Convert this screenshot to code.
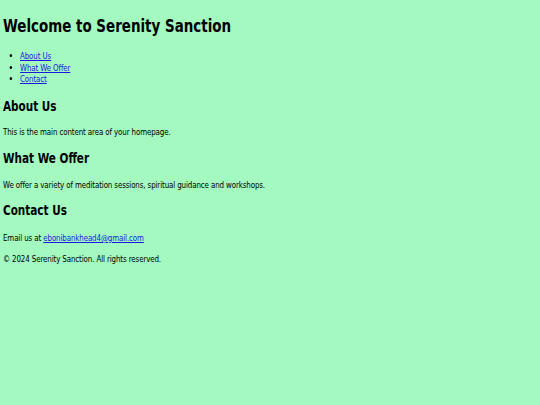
export default function App() {
  return (
    <div className="min-h-[405px] bg-[#a3f9bf] px-[3px] text-black" style={{ fontFamily: '"DejaVu Sans Condensed", "DejaVu Sans", sans-serif' }}>
      {/* condensed face is not installed, so squeeze the regular one */}
      <div className="origin-top-left scale-x-[0.83]">
        <header>
          <h1 className="pt-[15px] text-[18px] font-bold leading-[22px]">Welcome to Serenity Sanction</h1>
          <nav>
            <ul className="mt-[13px] list-disc pl-[20.5px] text-[9.5px] leading-[11.5px] tracking-[-0.15px]">
              <li><a href="#about" className="text-[#1a1ae0] underline">About Us</a></li>
              <li><a href="#offer" className="text-[#1a1ae0] underline">What We Offer</a></li>
              <li><a href="#contact" className="text-[#1a1ae0] underline">Contact</a></li>
            </ul>
          </nav>
        </header>

        <main className="text-[9.5px] leading-[11.5px] tracking-[-0.15px]">
          <section id="about">
            <h2 className="mt-[13px] text-[14px] font-bold leading-[17px] tracking-normal">About Us</h2>
            <p className="mt-[11.5px]">This is the main content area of your homepage.</p>
          </section>
          <section id="offer">
            <h2 className="mt-[12.5px] text-[14px] font-bold leading-[17px] tracking-normal">What We Offer</h2>
            <p className="mt-[11.5px]">We offer a variety of meditation sessions, spiritual guidance and workshops.</p>
          </section>
          <section id="contact">
            <h2 className="mt-[11.5px] text-[14px] font-bold leading-[17px] tracking-normal">Contact Us</h2>
            <p className="mt-[13.5px]">
              Email us at <a href="mailto:ebonibankhead4@gmail.com" className="text-[#1a1ae0] underline">ebonibankhead4@gmail.com</a>
            </p>
          </section>
        </main>

        <footer className="mt-[9px] text-[9.5px] leading-[11.5px] tracking-[-0.15px]">
          <p>© 2024 Serenity Sanction. All rights reserved.</p>
        </footer>
      </div>
    </div>
  );
}
